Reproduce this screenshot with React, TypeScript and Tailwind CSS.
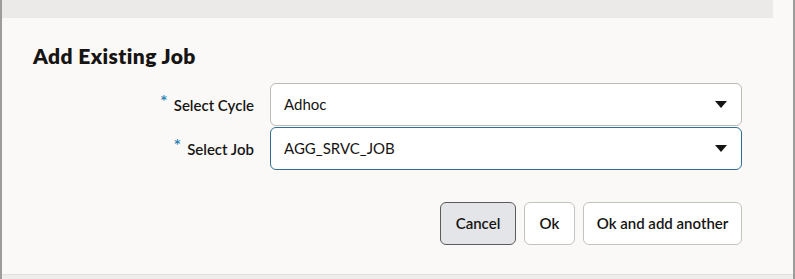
function Caret() {
  return (
    <svg width="12" height="7" viewBox="0 0 12 7" className="shrink-0">
      <path d="M0 0h12L6 7z" fill="#161513" />
    </svg>
  );
}

function SelectField({ label, value, focused }: { label: string; value: string; focused?: boolean }) {
  return (
    <div className="flex items-center">
      <div className="w-[268px] pr-[16px] flex justify-end items-start text-[15px] font-semibold text-[#161513]">
        <span className="text-[#2b82b4] text-[18px] leading-none mr-[6px] -mt-[3px]">*</span>
        <span className="leading-5">{label}</span>
      </div>
      <div
        className={`w-[472px] h-[43px] rounded-[6px] bg-white flex items-center justify-between pl-[13px] pr-[14px] border ${
          focused ? 'border-[#2e6e93] border-[1.5px]' : 'border-[#bdbbb8]'
        }`}
      >
        <span className="text-[15px] text-[#161513]">{value}</span>
        <Caret />
      </div>
    </div>
  );
}

export default function App() {
  return (
    <div
      className="w-[795px] h-[279px] bg-[#fbf9f8] border-l-2 border-r-2 border-[#9e9c9a] flex flex-col overflow-hidden"
      style={{ fontFamily: 'Lato, "Noto Sans", sans-serif' }}
    >
      <div className="h-[18px] w-[771px] bg-[#ebeae8]" />
      <div className="pl-[31px] pt-[24px]">
        <h2 className="text-[21px] font-extrabold text-[#161513] leading-7 tracking-[0.4px]">Add Existing Job</h2>
      </div>
      <div className="mt-[13px] flex flex-col gap-[1px]">
        <SelectField label="Select Cycle" value="Adhoc" />
        <SelectField label="Select Job" value="AGG_SRVC_JOB" focused />
      </div>
      <div className="mt-[32px] flex justify-end gap-[8px] pr-[51px]">
        <button className="h-[43px] w-[76px] rounded-[6px] border border-[#5d5b59] bg-[#e4e5e9] text-[15px] font-semibold text-[#161513]">
          Cancel
        </button>
        <button className="h-[43px] w-[51px] rounded-[6px] border border-[#c4c2bf] bg-white text-[15px] font-semibold text-[#161513]">
          Ok
        </button>
        <button className="h-[43px] w-[159px] rounded-[6px] border border-[#c4c2bf] bg-white text-[15px] font-semibold text-[#161513]">
          Ok and add another
        </button>
      </div>
      <div className="flex-1" />
      <div className="h-[5px] bg-[#eeedec] border-t border-[#e3e1df]" />
    </div>
  );
}
